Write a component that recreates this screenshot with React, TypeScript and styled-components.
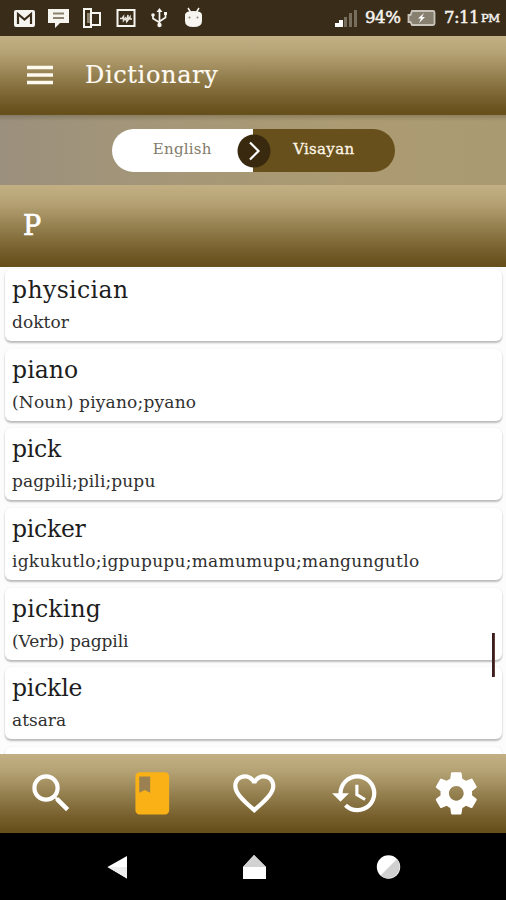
import React from "react";
import styled, { createGlobalStyle } from "styled-components";
import { MdSearch, MdFavoriteBorder } from "react-icons/md";

const GlobalStyle = createGlobalStyle`
  * { box-sizing: border-box; }
  body { margin: 0; background: #000; }
`;

const gold = "linear-gradient(180deg, #c2b084 0%, #b5a274 22%, #937e4e 52%, #79622f 77%, #67501b 96%, #67501b 100%)";

const Screen = styled.div`
  width: 506px;
  height: 900px;
  display: flex;
  flex-direction: column;
  overflow: hidden;
  background: #000;
  font-family: "DejaVu Serif", serif;
`;

const StatusBar = styled.header`
  height: 36px;
  flex: none;
  display: flex;
  align-items: center;
  justify-content: space-between;
  background: #392d1a;
  color: #f6f3ee;
`;

const StatusIcons = styled.svg`
  display: block;
  width: 210px;
  height: 36px;
`;

const StatusInfo = styled.div`
  display: flex;
  align-items: center;
  height: 36px;
  padding-right: 6px;
`;

const StatusText = styled.span<{ $size: number; $spacing: number; $width: number }>`
  font-size: ${(p) => p.$size}px;
  letter-spacing: ${(p) => p.$spacing}px;
  width: ${(p) => p.$width}px;
  line-height: 36px;
  white-space: nowrap;
  -webkit-text-stroke: 0.5px currentColor;
`;

const Signal = styled.svg`
  width: 24px;
  height: 20px;
  margin-right: 7px;
`;

const Battery = styled.svg`
  width: 30px;
  height: 18px;
  margin: 0 8px 0 5px;
`;

const TitleBar = styled.div`
  height: 79px;
  flex: none;
  display: flex;
  align-items: center;
  padding: 0 0 2px 27px;
  background: ${gold};
`;

const MenuIcon = styled.svg`
  width: 26px;
  height: 20px;
`;

const Title = styled.h1`
  margin: 1px 0 0 32px;
  font-size: 24px;
  font-weight: 400;
  letter-spacing: 0.65px;
  line-height: 30px;
  color: #fffaf2;
  -webkit-text-stroke: 0.2px currentColor;
`;

const LanguageBar = styled.div`
  height: 70px;
  flex: none;
  display: flex;
  justify-content: center;
  align-items: center;
  background: linear-gradient(180deg, rgba(80, 70, 45, 0.3), rgba(80, 70, 45, 0) 6px),
    linear-gradient(90deg, #9b907d 0%, #a59777 35%, #ac9b72 70%, #aa9a72 100%);
`;

const Toggle = styled.div`
  position: relative;
  width: 283px;
  height: 43px;
  display: flex;
  border-radius: 22px;
  overflow: hidden;
`;

const Language = styled.div<{ $active?: boolean }>`
  flex: 1;
  line-height: 41px;
  font-size: 15px;
  letter-spacing: ${(p) => (p.$active ? 0.3 : 0.25)}px;
  text-align: center;
  color: ${(p) => (p.$active ? "#fff5e4" : "#827b69")};
  background: ${(p) => (p.$active ? "#67501b" : "#fff")};
  -webkit-text-stroke: ${(p) => (p.$active ? "0.3px currentColor" : "0")};
`;

const Knob = styled.svg`
  position: absolute;
  left: 125px;
  top: 5px;
  width: 34px;
  height: 34px;
`;

const LetterBar = styled.div`
  height: 82px;
  flex: none;
  display: flex;
  align-items: center;
  padding: 0 0 1px 23px;
  font-size: 27px;
  color: #fff;
  -webkit-text-stroke: 0.7px #fff;
  background: ${gold};
`;

const WordList = styled.main`
  position: relative;
  height: 487px;
  flex: none;
  padding: 2px 4px 0 5px;
  display: flex;
  flex-direction: column;
  gap: 7.7px;
  overflow: hidden;
  background: #fcfcfc;
`;

const Card = styled.article`
  height: 72px;
  flex: none;
  padding: 7px 7px 0;
  border-radius: 6px;
  background: #fff;
  box-shadow: 0 2px 2px rgba(0, 0, 0, 0.25), 0 0 2px rgba(0, 0, 0, 0.07);
`;

const Word = styled.div<{ $spacing: number }>`
  font-size: 23.5px;
  line-height: 29px;
  letter-spacing: ${(p) => p.$spacing}px;
  color: #1d1d1d;
`;

const Meaning = styled.div<{ $spacing: number }>`
  margin-top: 5px;
  font-size: 17px;
  line-height: 25px;
  letter-spacing: ${(p) => p.$spacing}px;
  white-space: nowrap;
  color: #303030;
`;

const ScrollThumb = styled.div`
  position: absolute;
  right: 11px;
  top: 366px;
  width: 3px;
  height: 44px;
  background: linear-gradient(90deg, #3d1c20 0 60%, #795643);
`;

const TabBar = styled.nav`
  height: 79px;
  flex: none;
  display: grid;
  grid-template-columns: repeat(5, 101.3px);
  place-items: center;
  padding-left: 0.6px;
  overflow: hidden;
  color: #fff;
  background: ${gold};

  svg {
    display: block;
    width: 50.6px;
    height: 50.6px;
  }
`;

const SystemBar = styled.footer`
  height: 67px;
  flex: none;
  background: #000;

  svg {
    display: block;
  }
`;

const entries = [
  { word: "physician", meaning: "doktor", ws: 0.4, ms: 0.05 },
  { word: "piano", meaning: "(Noun) piyano;pyano", ws: 0.1, ms: 0.2 },
  { word: "pick", meaning: "pagpili;pili;pupu", ws: -0.25, ms: 0.12 },
  { word: "picker", meaning: "igkukutlo;igpupupu;mamumupu;mangungutlo", ws: -0.25, ms: 0.27 },
  { word: "picking", meaning: "(Verb) pagpili", ws: 0.2, ms: -0.08 },
  { word: "pickle", meaning: "atsara", ws: -0.2, ms: 0 },
];

export default function App() {
  return (
    <Screen>
      <GlobalStyle />
      <StatusBar>
        <StatusIcons viewBox="0 0 210 36" fill="none">
          <rect x="14" y="10" width="21" height="17" rx="2" fill="#f7f5f0" />
          <path d="M18 24V14l6.500 5.500L31 14v10" stroke="#392d1a" strokeWidth="2.200" />
          <path d="M48 9h21v14H60l-5 5v-5h-7z" fill="#f7f5f0" />
          <path d="M53 13.500h11M53 18h11" stroke="#8b826f" strokeWidth="2" />
          <path d="M91 12V9h-7v18h7v-3M91 13h9v12h-9z" stroke="#f7f5f0" strokeWidth="2" />
          <rect x="87" y="13" width="3" height="10" fill="#8b826f" />
          <rect x="117.500" y="10" width="17" height="16" stroke="#f7f5f0" strokeWidth="2" />
          <path d="M120 18.500h2l1.500-2v4l2-2.500 1 3 1.500-6v5l2-3v2h2" stroke="#e7e3da" strokeWidth="1.500" />
          <path d="M159.500 10v16M153 15v3.500l6.500 4M165.500 13v4.500l-6 4" stroke="#f7f5f0" strokeWidth="1.700" />
          <path d="M156.500 12l3-4 3 4z" fill="#f7f5f0" />
          <circle cx="153" cy="15" r="1.800" fill="#f7f5f0" />
          <circle cx="159.500" cy="25" r="2.200" fill="#f7f5f0" />
          <path d="M164 12h3v3h-3z" fill="#f7f5f0" />
          <path d="M188 8l2.500 4M199 8l-2.500 4" stroke="#f7f5f0" strokeWidth="1.500" />
          <path d="M185 15q0-4 8.500-4t8.500 4v6q0 6-8.500 6t-8.500-6z" fill="#f7f5f0" />
          <circle cx="189.500" cy="17.500" r="1" fill="#8b826f" />
          <circle cx="197.500" cy="17.500" r="1" fill="#8b826f" />
        </StatusIcons>
        <StatusInfo>
          <Signal viewBox="0 0 24 20">
            <path d="M1 15h4v4H1zM5 12h4v7H5z" fill="#fff" />
            <path d="M10 9h3v10h-3zM15 5h3v14h-3zM20 2h3v17h-3z" fill="#776e5e" />
          </Signal>
          <StatusText $size={16.5} $spacing={-0.4} $width={36}>94%</StatusText>
          <Battery viewBox="0 0 30 18">
            <path d="M6 2h21a1.500 1.500 0 0 1 1.500 1.500v11A1.500 1.500 0 0 1 27 16H6l-1.500-3H2.500V6h2z" fill="#877f70" stroke="#c9c4ba" strokeWidth="1.800" />
            <path d="M18 4l-6 5.500h3L13 14l6-6h-3z" fill="#fff" />
          </Battery>
          <StatusText $size={16.5} $spacing={-0.5} $width={37}>7:11</StatusText>
          <StatusText $size={11.5} $spacing={-0.5} $width={19}>PM</StatusText>
        </StatusInfo>
      </StatusBar>

      <TitleBar>
        <MenuIcon viewBox="0 0 26 20">
          <path d="M0 2.500h26M0 10h26M0 17.500h26" stroke="#fffaf0" strokeWidth="3.300" />
        </MenuIcon>
        <Title>Dictionary</Title>
      </TitleBar>

      <LanguageBar>
        <Toggle>
          <Language>English</Language>
          <Language $active>Visayan</Language>
          <Knob viewBox="0 0 34 34" fill="none">
            <circle cx="17" cy="17" r="16.500" fill="#39290e" />
            <path d="M13 8.500l8.500 8.500L13 25.500" stroke="#fff" strokeWidth="2.200" />
          </Knob>
        </Toggle>
      </LanguageBar>

      <LetterBar>P</LetterBar>

      <WordList>
        {entries.map((e) => (
          <Card key={e.word}>
            <Word $spacing={e.ws}>{e.word}</Word>
            <Meaning $spacing={e.ms}>{e.meaning}</Meaning>
          </Card>
        ))}
        <Card />
        <ScrollThumb />
      </WordList>

      <TabBar>
        <MdSearch />
        <svg viewBox="0 0 24 24">
          <path d="M5.600 3.500h6v8l-3-1.300-3 1.300z" fill="#9b8052" />
          <path fillRule="evenodd" d="M18 2H6c-1.100 0-2 .9-2 2v16c0 1.100.9 2 2 2h12c1.100 0 2-.9 2-2V4c0-1.100-.9-2-2-2zM5.800 4h5.200v7.700l-2.600-1.300-2.600 1.300V4z" fill="#f9b115" />
        </svg>
        <MdFavoriteBorder />
        <svg viewBox="0 0 24 24" fill="currentColor">
          <path d="M13 3a9 9 0 0 0-9 9H1l3.890 3.890.07.14L9 12H6c0-3.870 3.130-7 7-7s7 3.130 7 7-3.130 7-7 7c-1.930 0-3.680-.79-4.940-2.060l-1.420 1.420A8.954 8.954 0 0 0 13 21a9 9 0 0 0 0-18zm-1 5v5l4.280 2.540.72-1.210-3.500-2.080V8H12z" />
        </svg>
        <svg viewBox="0 0 24 24" fill="currentColor">
          <path d="M19.430 12.980c.04-.32.07-.64.07-.98s-.03-.66-.07-.98l2.110-1.650c.19-.15.24-.42.12-.64l-2-3.460c-.12-.22-.39-.3-.61-.22l-2.490 1c-.52-.4-1.080-.73-1.690-.98l-.38-2.650C14.460 2.180 14.250 2 14 2h-4c-.25 0-.46.18-.49.42l-.38 2.650c-.61.25-1.170.59-1.690.98l-2.490-1c-.23-.09-.49 0-.61.22l-2 3.460c-.13.22-.07.49.12.64l2.110 1.650c-.04.32-.07.65-.07.98s.03.66.07.98l-2.110 1.650c-.19.15-.24.42-.12.64l2 3.460c.12.22.39.3.61.22l2.490-1c.52.4 1.080.73 1.690.98l.38 2.650c.03.24.24.42.49.42h4c.25 0 .46-.18.49-.42l.38-2.650c.61-.25 1.170-.59 1.690-.98l2.490 1c.23.09.49 0 .61-.22l2-3.460c.12-.22.07-.49-.12-.64l-2.110-1.650zM12 15.500c-1.930 0-3.500-1.570-3.500-3.500s1.570-3.500 3.500-3.500 3.500 1.570 3.500 3.500-1.570 3.500-3.500 3.500z" />
        </svg>
      </TabBar>

      <SystemBar>
        <svg width="506" height="67" viewBox="0 0 506 67">
          <path d="M127 23v22.500L107.500 34z" fill="#fff" />
          <path d="M107.500 34H127v11.500z" fill="#ededed" />
          <path d="M243 46V34l11-12 12 12v12z" fill="#fff" />
          <path d="M243 34l11-12 12 12z" fill="#d2d2d2" />
          <circle cx="388.500" cy="34" r="11.700" fill="#fff" />
          <path d="M397 26a11.700 11.700 0 0 1-16.500 16.500z" fill="#d0d0d0" />
        </svg>
      </SystemBar>
    </Screen>
  );
}
